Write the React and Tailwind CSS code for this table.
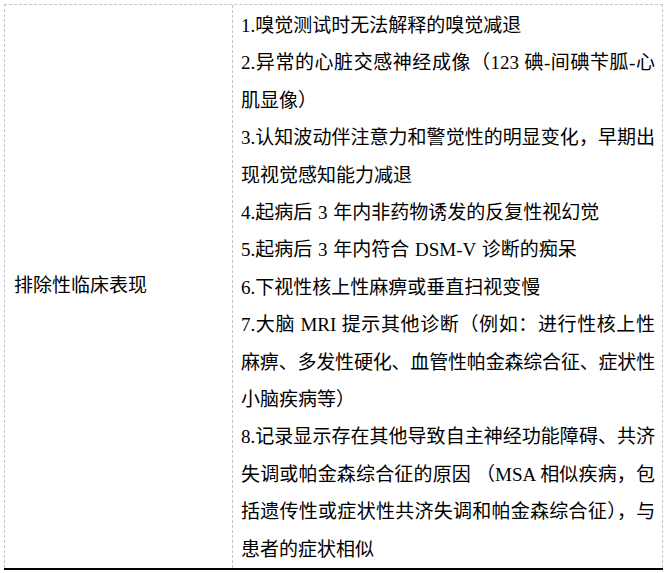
export default function App() {
  const lines = [
    { t: "1.嗅觉测试时无法解释的嗅觉减退" },
    { t: "2.异常的心脏交感神经成像（123 碘-间碘苄胍-心", j: true },
    { t: "肌显像）" },
    { t: "3.认知波动伴注意力和警觉性的明显变化，早期出", j: true },
    { t: "现视觉感知能力减退" },
    { t: "4.起病后 3 年内非药物诱发的反复性视幻觉" },
    { t: "5.起病后 3 年内符合 DSM-V 诊断的痴呆" },
    { t: "6.下视性核上性麻痹或垂直扫视变慢" },
    { t: "7.大脑 MRI 提示其他诊断（例如：进行性核上性", j: true },
    { t: "麻痹、多发性硬化、血管性帕金森综合征、症状性", j: true, tight: true },
    { t: "小脑疾病等）" },
    { t: "8.记录显示存在其他导致自主神经功能障碍、共济", j: true },
    { t: "失调或帕金森综合征的原因 （MSA 相似疾病，包", j: true },
    { t: "括遗传性或症状性共济失调和帕金森综合征），与", j: true, tight: true },
    { t: "患者的症状相似" },
  ];

  return (
    <div
      lang="zh-CN"
      className="w-[667px] h-[573px] bg-white pl-[4px] pt-[4px] text-black font-['Liberation_Serif','Noto_Sans_CJK_SC',serif]"
    >
      <div className="w-[659px]">
        <div className="flex border-t border-l border-r border-dashed border-[#c4c4c4]">
          <div className="w-[228px] shrink-0 flex items-center pl-[9px] border-r border-dashed border-[#c4c4c4] text-[19px]">
            排除性临床表现
          </div>
          <div className="w-[429px] shrink-0 pl-[8px] pr-[7px] pt-[2px] text-[19px] leading-[37.4px]">
            {lines.map((l, i) =>
              l.j ? (
                <div
                  key={i}
                  className={
                    l.tight
                      ? "text-justify [text-align-last:justify] tracking-[-0.2px]"
                      : "text-justify [text-align-last:justify]"
                  }
                >
                  {l.t}
                </div>
              ) : (
                <div key={i} className="whitespace-nowrap [word-spacing:1px]">
                  {l.t}
                </div>
              )
            )}
          </div>
        </div>
        <div className="h-[2px] bg-black"></div>
      </div>
    </div>
  );
}
